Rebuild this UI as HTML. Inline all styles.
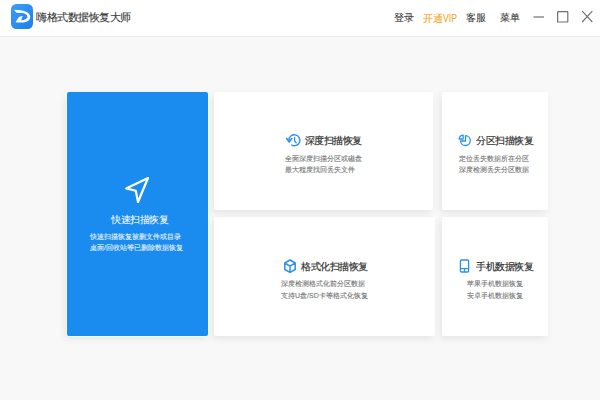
<!DOCTYPE html>
<html><head><meta charset="utf-8">
<style>
*{margin:0;padding:0;box-sizing:border-box}
html,body{width:600px;height:400px;overflow:hidden;background:#f8f8f8;font-family:"Liberation Sans",sans-serif}
.bar{position:absolute;left:0;top:0;width:600px;height:37px;background:#fff;border-bottom:1px solid #ececec}
.logo{position:absolute;left:11px;top:4px;width:22px;height:25px}
.ttl{position:absolute;left:36px;top:9.5px;font-size:11px;letter-spacing:-0.45px;line-height:14px;color:#3a3a3a;-webkit-text-stroke:0.12px currentColor;white-space:nowrap}
.mi{position:absolute;top:11px;font-size:10px;line-height:14px;color:#3a3a3a;white-space:nowrap;-webkit-text-stroke:0.1px currentColor}
.card{position:absolute;background:#fff;border-radius:2px;box-shadow:-2px 3px 7px rgba(0,0,0,0.08)}
.blue{position:absolute;left:67px;top:92px;width:141px;height:244px;background:#1a8cf0;border-radius:2px;box-shadow:0 0 0 1px #f8f6f0,-2px 3px 7px rgba(0,0,0,0.08)}
.t{position:absolute;white-space:nowrap;font-size:10px;letter-spacing:-0.5px;line-height:12px;color:#333;-webkit-text-stroke:0.2px currentColor}
.s{position:absolute;white-space:nowrap;font-size:7px;line-height:11px;color:#777;-webkit-text-stroke:0.12px currentColor}
svg{position:absolute}
</style></head><body>
<div class="bar">
  <svg class="logo" viewBox="0 0 22 25"><defs><linearGradient id="g" x1="0" y1="0" x2="1" y2="1"><stop offset="0" stop-color="#3d9df6"/><stop offset="1" stop-color="#1a7fe9"/></linearGradient></defs><rect x="0" y="0" width="22" height="25" rx="5.5" fill="url(#g)"/>
  <path d="M3 5.75 C8 5.9 12 6.3 14.5 7.5 C17.5 8.8 19.3 10.5 19.3 12.7 C19.3 16 16.5 18.4 11 18.5 L4.5 18.5 C5.5 16.5 7 14 8.5 12.8 C9.5 12.2 10.8 12 11.8 12 C11 13.5 10.4 15 10.2 16.4 C13 16.2 16.4 15 16.4 12.8 C16.4 10.5 14 9 10.5 8.9 L5.6 8.8 C4.5 7.9 3.6 6.8 3 5.75 Z" fill="#fff"/></svg>
  <div class="ttl">嗨格式数据恢复大师</div>
  <div class="mi" style="left:394px">登录</div>
  <div class="mi" style="left:423px;color:#f5a623">开通<span style="display:inline-block;font-size:10.5px;transform:scaleX(0.82);transform-origin:0 50%">VIP</span></div>
  <div class="mi" style="left:466px">客服</div>
  <div class="mi" style="left:500px">菜单</div>
  <svg style="left:530px;top:8px" width="70" height="18" viewBox="530 8 70 18">
    <line x1="533.5" y1="17" x2="544" y2="17" stroke="#707070" stroke-width="1.2"/>
    <rect x="557.6" y="11.6" width="10.2" height="10.4" rx="0.6" fill="none" stroke="#707070" stroke-width="1.2"/>
    <path d="M582.2 11.2 L592.3 22 M592.3 11.2 L582.2 22" stroke="#707070" stroke-width="1.15"/>
  </svg>
</div>

<div class="blue"></div>
<svg style="left:120px;top:172px" width="34" height="36" viewBox="120 172 34 36"><path d="M148 178 L126.2 188.4 L135.8 190.8 L138 202 Z" fill="none" stroke="#fff" stroke-width="2.2" stroke-linejoin="round"/></svg>
<div class="t" style="left:111px;top:214px;color:#fff;-webkit-text-stroke:0.05px #fff">快速扫描恢复</div>
<div class="s" style="left:90px;top:231px;color:#e3f0ff">快速扫描恢复被删文件或目录</div>
<div class="s" style="left:90px;top:242px;color:#e3f0ff">桌面/回收站等已删除数据恢复</div>

<div class="card" style="left:214px;top:92px;width:219px;height:118px"></div>
<div class="card" style="left:214px;top:217px;width:221px;height:119px"></div>
<div class="card" style="left:442px;top:92px;width:106px;height:118px"></div>
<div class="card" style="left:442px;top:217px;width:106px;height:119px"></div>

<!-- card1 -->
<svg style="left:284px;top:132px" width="18" height="18" viewBox="284 132 18 18"><path d="M288.9 140.3 A5.5 5.5 0 1 1 291.6 145" fill="none" stroke="#2b8ff0" stroke-width="1.4" stroke-linecap="round"/><path d="M286.6 138.6 L289.2 141.9 L291.9 138.6" fill="none" stroke="#2b8ff0" stroke-width="1.6" stroke-linecap="round" stroke-linejoin="round"/><path d="M294.6 137.4 V141 L296.2 142.8" fill="none" stroke="#2b8ff0" stroke-width="1.3" stroke-linecap="round"/></svg>
<div class="t" style="left:304.5px;top:135px">深度扫描恢复</div>
<div class="s" style="left:285px;top:153px">全面深度扫描分区或磁盘</div>
<div class="s" style="left:285px;top:164px">最大程度找回丢失文件</div>

<!-- card2 -->
<svg style="left:282px;top:257px" width="17" height="18" viewBox="282 257 17 18"><path d="M290 260 L295.2 263 V269.5 L290 272.4 L284.8 269.5 V263 Z M284.8 263 L290 266.2 L295.2 263 M290 266.2 V272.4" fill="none" stroke="#2b8ff0" stroke-width="1.5" stroke-linejoin="round"/></svg>
<div class="t" style="left:301px;top:261px">格式化扫描恢复</div>
<div class="s" style="left:281px;top:278px">深度检测格式化前分区数据</div>
<div class="s" style="left:281px;top:290px">支持U盘/SD卡等格式化恢复</div>

<!-- card3 -->
<svg style="left:457px;top:132px" width="15" height="16" viewBox="457 132 15 16"><path d="M465.5 135.7 A4.9 4.9 0 1 1 460.5 141 H465.5 Z" fill="none" stroke="#2b8ff0" stroke-width="1.3" stroke-linejoin="round"/><path d="M463.1 139 H459.2 A3.9 3.9 0 0 1 463.1 135.1 Z" fill="none" stroke="#2b8ff0" stroke-width="1.3" stroke-linejoin="round"/></svg>
<div class="t" style="left:476px;top:135px">分区扫描恢复</div>
<div class="s" style="left:459px;top:153px">定位丢失数据所在分区</div>
<div class="s" style="left:459px;top:164px">深度检测丢失分区数据</div>

<!-- card4 -->
<svg style="left:458px;top:258px" width="13" height="16" viewBox="458 258 13 16"><rect x="460.4" y="260" width="8.2" height="12" rx="1.2" fill="none" stroke="#2b8ff0" stroke-width="1.3"/><path d="M460.4 268.6 H468.6 M464.5 268.6 V272" stroke="#2b8ff0" stroke-width="1.2" fill="none"/></svg>
<div class="t" style="left:476px;top:261px">手机数据恢复</div>
<div class="s" style="left:466.5px;top:278px">苹果手机数据恢复</div>
<div class="s" style="left:466.5px;top:290px">安卓手机数据恢复</div>
</body></html>
